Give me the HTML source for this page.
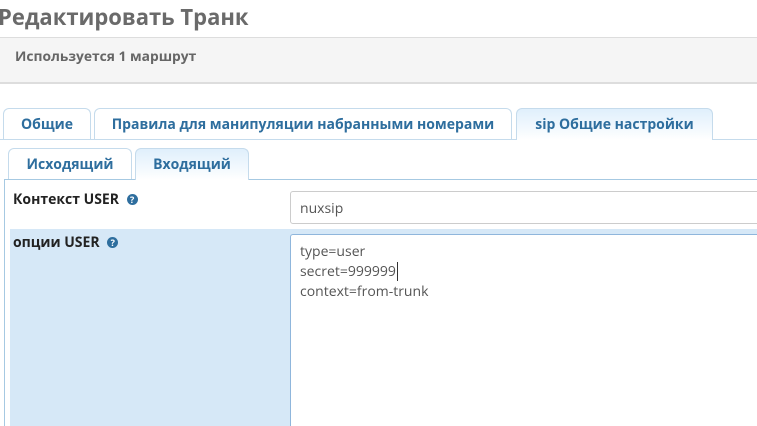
<!DOCTYPE html>
<html style="overflow:hidden;height:426px"><head><meta charset="utf-8"><style>
*{box-sizing:border-box;margin:0;padding:0}
body{width:757px;height:426px;overflow:hidden;background:#fff;font-family:"Open Sans","Liberation Sans","DejaVu Sans",sans-serif;position:relative}
.abs{position:absolute}
h1{position:absolute;left:-2px;top:2px;font-size:22px;font-weight:bold;color:#6a6a6a;white-space:nowrap}
.info{left:0;top:37px;width:757px;height:47px;background:#f5f5f5;border-top:1px solid #ddd;border-bottom:2px solid #ddd;font-size:13.8px;font-weight:bold;color:#666;padding:9px 15px}
.tab{position:absolute;border:1px solid #c5dbec;border-bottom:none;border-radius:6px 6px 0 0;background:#fff;color:#2e6e9e;font-weight:bold;font-size:14px;text-align:center;line-height:31px;white-space:nowrap}
.act{background:linear-gradient(#dfeffc,#fff);}
.line{position:absolute;height:1px;background:#a6c9e2}
.q{display:inline-block;width:11px;height:11px;border-radius:50%;background:#2e6e9e;color:#fff;font-size:9px;line-height:11px;text-align:center;vertical-align:1px;margin-left:4px}
</style></head><body>
<h1>Редактировать Транк</h1>
<div class="abs info">Используется 1 маршрут</div>
<div class="tab" style="left:3px;top:108px;width:88px;height:32px">Общие</div>
<div class="tab" style="left:94px;top:108px;width:418px;height:32px">Правила для манипуляции набранными номерами</div>
<div class="tab act" style="left:516px;top:108px;width:197px;height:32px">sip Общие настройки</div>
<div class="line" style="left:0;top:139px;width:516px;background:#c5dbec"></div>
<div class="line" style="left:713px;top:139px;width:44px;background:#c5dbec"></div>
<div class="tab" style="left:8px;top:148px;width:124px;height:32px">Исходящий</div>
<div class="tab act" style="left:135px;top:148px;width:114px;height:32px">Входящий</div>
<div class="line" style="left:4px;top:179px;width:131px"></div>
<div class="line" style="left:249px;top:179px;width:508px"></div>
<div class="abs" style="left:4px;top:179px;width:1px;height:247px;background:#a6c9e2"></div>
<div class="abs" style="left:13px;top:190px;font-size:14px;font-weight:bold;color:#222;white-space:nowrap">Контекст USER <span class="q">?</span></div>
<div class="abs" style="left:290px;top:191px;width:470px;height:33px;border:1px solid #ccc;border-radius:3px;font-size:14px;color:#555;padding:7px 9px">nuxsip</div>
<div class="abs" style="left:10px;top:229px;width:747px;height:197px;background:#d6e8f7"></div>
<div class="abs" style="left:13px;top:233px;font-size:14px;font-weight:bold;color:#222;white-space:nowrap">опции USER <span class="q">?</span></div>
<div class="abs" style="left:290px;top:234px;width:470px;height:192px;background:#fff;border:1px solid #8fb6dc;border-bottom:none;border-radius:3px 3px 0 0;font-size:14px;color:#555;padding:7px 9px;line-height:20px">type=user<br>secret=999999<span style="border-left:1px solid #333;margin-left:1px"></span><br>context=from-trunk</div>
</body></html>
